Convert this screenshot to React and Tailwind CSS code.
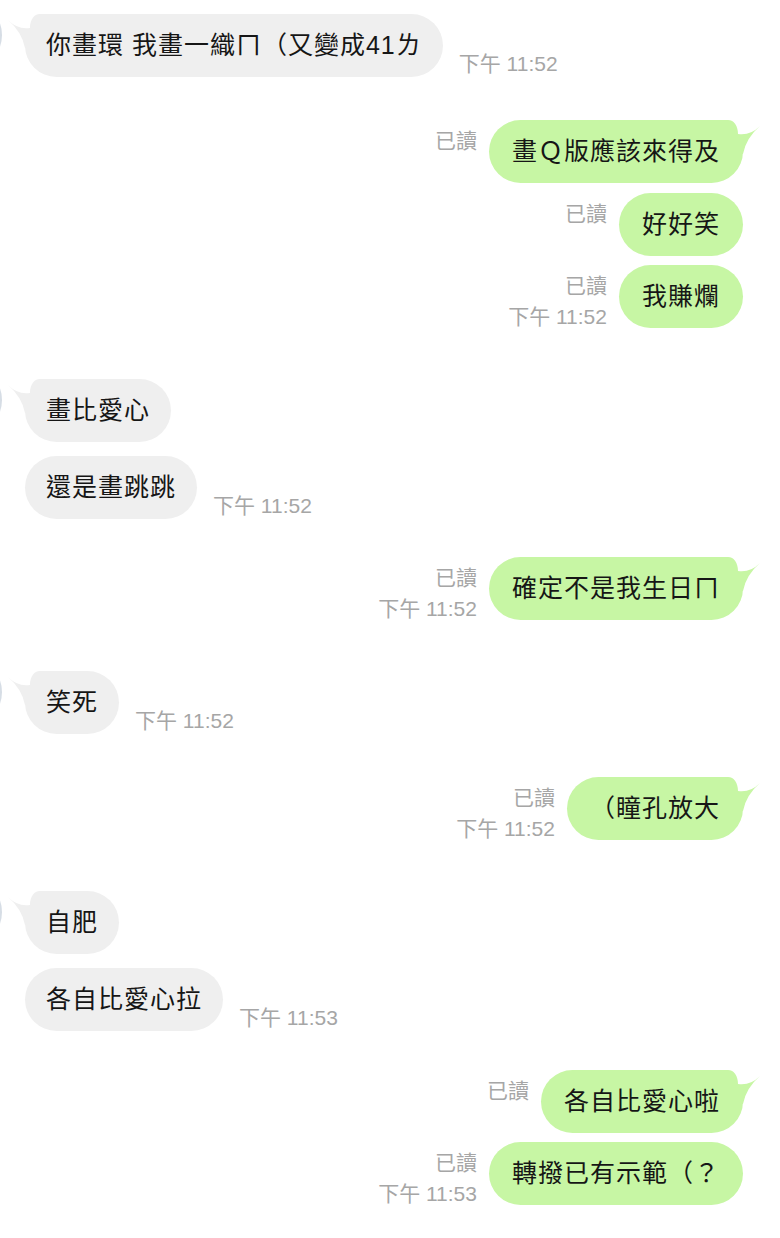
import React from "react";

const font = { fontFamily: '"Liberation Sans", "Noto Sans CJK TC", sans-serif' };

const messages = [
  { side: "left", text: "你畫環 我畫一織ㄇ（又變成41ㄌ", mt: "mt-[14px]", head: true, time: "下午 11:52" },
  { side: "right", text: "畫Ｑ版應該來得及", mt: "mt-[43px]", head: true },
  { side: "right", text: "好好笑", mt: "mt-[10px]" },
  { side: "right", text: "我賺爛", mt: "mt-[9px]", time: "下午 11:52" },
  { side: "left", text: "畫比愛心", mt: "mt-[51px]", head: true },
  { side: "left", text: "還是畫跳跳", mt: "mt-[14px]", time: "下午 11:52" },
  { side: "right", text: "確定不是我生日ㄇ", mt: "mt-[38px]", head: true, time: "下午 11:52" },
  { side: "left", text: "笑死", mt: "mt-[51px]", head: true, time: "下午 11:52" },
  { side: "right", text: "（瞳孔放大", mt: "mt-[43px]", head: true, time: "下午 11:52" },
  { side: "left", text: "自肥", mt: "mt-[51px]", head: true },
  { side: "left", text: "各自比愛心拉", mt: "mt-[14px]", time: "下午 11:53" },
  { side: "right", text: "各自比愛心啦", mt: "mt-[39px]", head: true },
  { side: "right", text: "轉撥已有示範（？", mt: "mt-[9px]", time: "下午 11:53" },
];

function Tail({ color, flip }) {
  const d = "M0,0 L17,0 C23,0 27,6 27,14 Q39,16 49,6 Q35,18 32,34 L0,34 Z";
  return (
    <svg
      width="52"
      height="34"
      viewBox="0 0 52 34"
      className={`absolute top-0 ${flip ? "left-[-20px]" : "right-[-20px]"}`}
    >
      <path d={d} fill={color} transform={flip ? "translate(52,0) scale(-1,1)" : undefined} />
    </svg>
  );
}

function Bubble({ msg }) {
  const mine = msg.side === "right";
  const color = mine ? "#c7f6a4" : "#efefef";
  return (
    <div
      className={`relative h-[63px] shrink-0 flex items-center rounded-full whitespace-nowrap text-[25px] tracking-[1px] text-[#161616] ${
        mine ? "bg-[#c7f6a4] px-[23px]" : "bg-[#efefef] px-[21px]"
      }`}
    >
      {msg.head && <Tail color={color} flip={!mine} />}
      {msg.head && !mine && (
        <div className="absolute left-[-93px] top-[-14px] w-[70px] h-[70px] rounded-full bg-[#d6dde5]" />
      )}
      <span className="relative">{msg.text}</span>
    </div>
  );
}

export default function App() {
  return (
    <div className="min-h-screen w-full bg-white overflow-hidden flex flex-col" style={font}>
      {messages.map((m, i) =>
        m.side === "left" ? (
          <div key={i} className={`flex items-end h-[63px] pl-[25px] ${m.mt}`}>
            <Bubble msg={m} />
            {m.time && (
              <span className="ml-[16px] text-[21px] leading-[26px] text-[#a6a6a6] whitespace-nowrap">
                {m.time}
              </span>
            )}
          </div>
        ) : (
          <div key={i} className={`flex justify-end items-start h-[63px] pr-[37px] ${m.mt}`}>
            <div className="flex flex-col items-end h-[63px] mr-[12px] pt-[5px] text-[21px] leading-[31px] text-[#a6a6a6] whitespace-nowrap">
              <span>已讀</span>
              {m.time && <span>{m.time}</span>}
            </div>
            <Bubble msg={m} />
          </div>
        )
      )}
    </div>
  );
}
